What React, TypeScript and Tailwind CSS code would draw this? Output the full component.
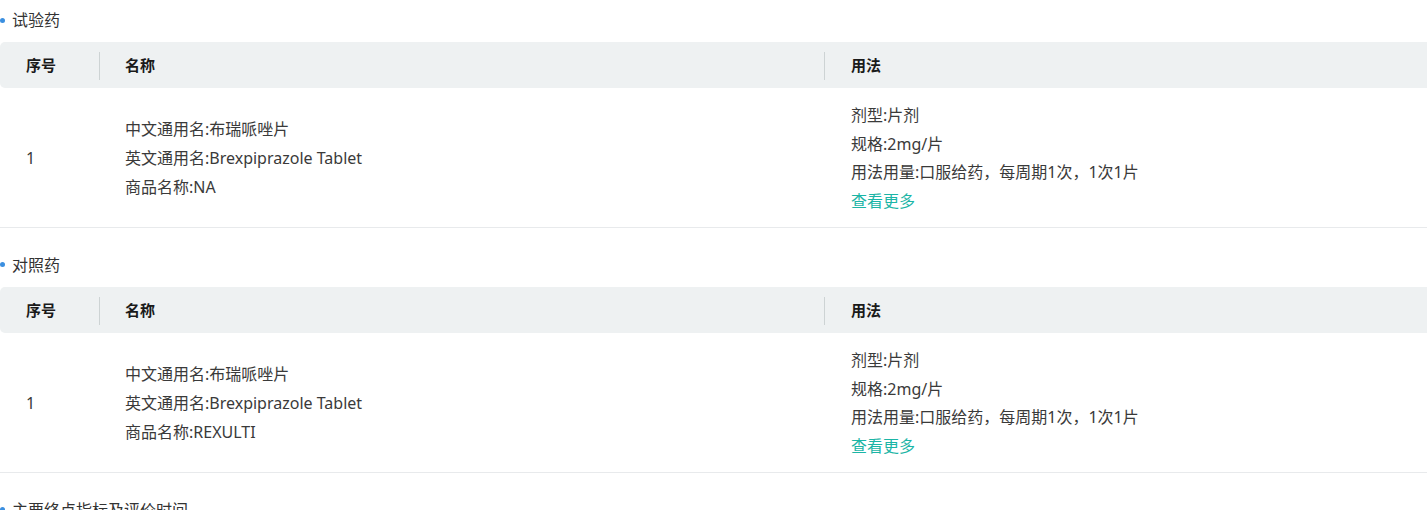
import React from "react";

type Drug = { cn: string; en: string; trade: string };

const font = {
  fontFamily: '"Noto Sans", "Noto Sans CJK SC", sans-serif',
};

function Title({ text }: { text: string }) {
  return (
    <div className="flex items-center h-6 text-[16px] text-[#333]">
      <span className="w-[5px] h-[5px] rounded-full bg-[#3b8fe0] mr-[7px]" />
      <span>{text}</span>
    </div>
  );
}

function DrugTable({ drug }: { drug: Drug }) {
  return (
    <div className="mt-[10px]">
      <div className="flex items-center h-[46px] bg-[#eef1f2] rounded-l-[5px] text-[15px] font-bold text-[#1a1a1a]">
        <div className="w-[100px] shrink-0 pl-[26px] h-full flex items-center relative">
          序号
          <span className="absolute right-0 top-[10px] bottom-[8px] w-px bg-[#cdd3d4]" />
        </div>
        <div className="w-[725px] shrink-0 pl-[25px] h-full flex items-center relative">
          名称
          <span className="absolute right-0 top-[10px] bottom-[8px] w-px bg-[#cdd3d4]" />
        </div>
        <div className="flex-1 pl-[26px]">用法</div>
      </div>
      <div className="flex items-center border-b border-[#e8eaec] pt-[13px] pb-[11px] text-[16px] leading-[28.7px] text-[#3a3a3a]">
        <div className="w-[100px] shrink-0 pl-[26px]">1</div>
        <div className="w-[725px] shrink-0 pl-[25px]">
          <div>中文通用名:{drug.cn}</div>
          <div>英文通用名:{drug.en}</div>
          <div>商品名称:{drug.trade}</div>
        </div>
        <div className="flex-1 pl-[26px]">
          <div>剂型:片剂</div>
          <div>规格:2mg/片</div>
          <div>用法用量:口服给药，每周期1次，1次1片</div>
          <div className="text-[#1bb5a6] cursor-pointer">查看更多</div>
        </div>
      </div>
    </div>
  );
}

export default function App() {
  return (
    <div className="w-[1427px] h-[510px] overflow-hidden bg-white" style={font}>
      <div className="pt-[8px] mb-[17px]">
        <Title text="试验药" />
        <DrugTable
          drug={{ cn: "布瑞哌唑片", en: "Brexpiprazole Tablet", trade: "NA" }}
        />
      </div>
      <div className="pt-[8px] mb-[17px]">
        <Title text="对照药" />
        <DrugTable
          drug={{ cn: "布瑞哌唑片", en: "Brexpiprazole Tablet", trade: "REXULTI" }}
        />
      </div>
      <div className="pt-[8px]">
        <Title text="主要终点指标及评价时间" />
      </div>
    </div>
  );
}
